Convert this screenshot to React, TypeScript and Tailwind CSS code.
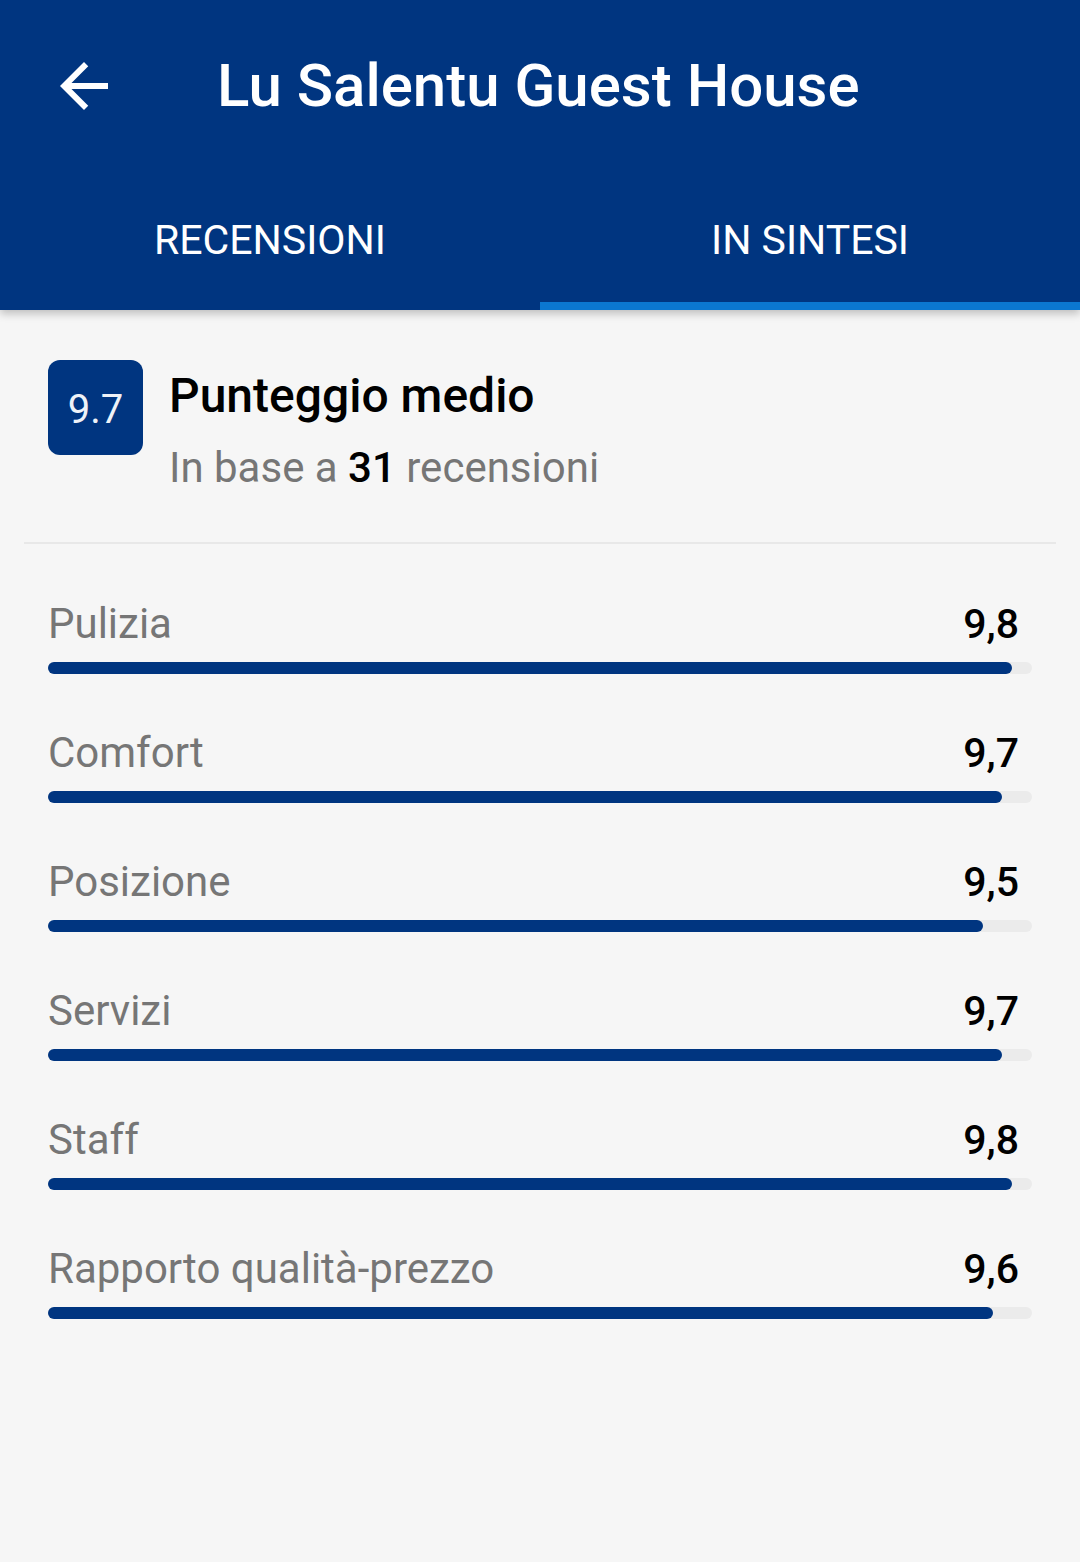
import React from 'react'

const rows = [
  { label: 'Pulizia', value: 9.8 },
  { label: 'Comfort', value: 9.7 },
  { label: 'Posizione', value: 9.5 },
  { label: 'Servizi', value: 9.7 },
  { label: 'Staff', value: 9.8 },
  { label: 'Rapporto qualità-prezzo', value: 9.6 },
]

function BackArrow() {
  return (
    <svg viewBox="0 0 24 24" className="h-[72px] w-[72px]" fill="white">
      <path d="M20 11H7.83l5.59-5.59L12 4l-8 8 8 8 1.41-1.41L7.83 13H20v-2z" />
    </svg>
  )
}

export default function App() {
  return (
    <div className="min-h-[1562px] w-[1080px] bg-[#f6f6f6] font-['Roboto',sans-serif]">
      <header className="relative z-10 bg-[#003580] shadow-[0_4px_8px_rgba(0,0,0,0.22)]">
        <div className="flex h-[168px] items-start pt-[51px]">
          <div className="ml-[48px] flex h-[70px] items-center">
            <BackArrow />
          </div>
          <h1 className="ml-[97px] text-[60px] font-medium leading-[70px] text-white">Lu Salentu Guest House</h1>
        </div>
        <div className="flex h-[142px]">
          <div className="flex flex-1 flex-col">
            <div className="flex-1 pt-[47px] text-center text-[41px] leading-[50px] text-white">RECENSIONI</div>
            <div className="h-[8px]" />
          </div>
          <div className="flex flex-1 flex-col">
            <div className="flex-1 pt-[47px] text-center text-[41px] leading-[50px] text-white">IN SINTESI</div>
            <div className="h-[8px] bg-[#0b77d0]" />
          </div>
        </div>
      </header>

      <section className="px-[48px] pt-[50px]">
        <div className="flex items-start">
          <div className="flex h-[95px] w-[95px] items-center justify-center rounded-[12px] bg-[#003580] pt-[4px] text-[40px] text-[#eef2f8]">
            9.7
          </div>
          <div className="ml-[26px]">
            <div className="text-[48px] font-medium leading-[71px] text-black">Punteggio medio</div>
            <div className="text-[42px] leading-[73px] text-[#767676]">
              In base a <span className="font-medium text-black">31</span> recensioni
            </div>
          </div>
        </div>
      </section>

      <div className="mx-[24px] mt-[38px] h-[2px] bg-[#e8e8e8]" />

      <div className="mt-[57px] flex flex-col gap-[56px] px-[48px]">
        {rows.map(r => (
          <div key={r.label}>
            <div className="flex items-start justify-between pr-[13px] leading-[46px]">
              <span className="text-[42px] text-[#767676]">{r.label}</span>
              <span className="text-[41px] font-medium text-black">{r.value.toFixed(1).replace('.', ',')}</span>
            </div>
            <div className="mt-[15px] h-[12px] w-full rounded-full bg-[#ebebeb]">
              <div className="h-full rounded-full bg-[#003580]" style={{ width: `${r.value * 10}%` }} />
            </div>
          </div>
        ))}
      </div>
    </div>
  )
}
